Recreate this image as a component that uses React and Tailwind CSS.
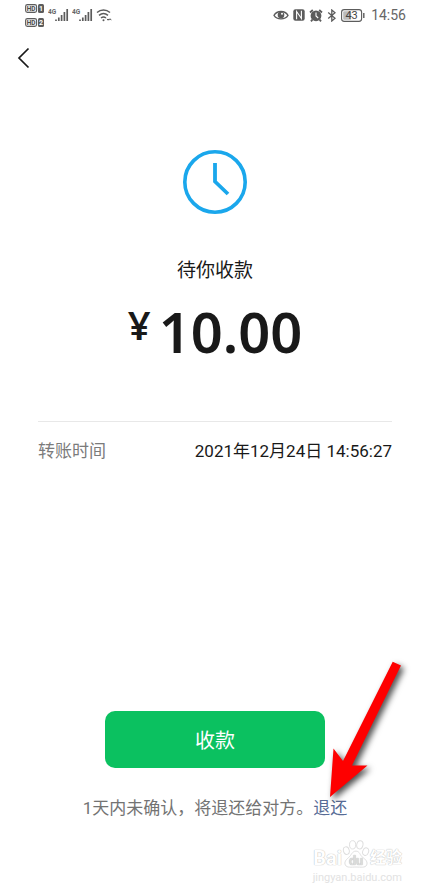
import React from 'react';

const details = [{ label: '转账时间', value: '2021年12月24日 14:56:27' }];

function HdBadge({ sim }) {
  return (
    <svg viewBox="0 0 20 9" className="h-[9px] w-5">
      <rect x="0.6" y="0.6" width="11" height="7.8" rx="1.8" fill="#eee" stroke="#5c5c5c" strokeWidth="1.1" />
      <rect x="13" y="0" width="6" height="9" rx="1.5" fill="#5c5c5c" />
      <text x="6.1" y="6.9" fontSize="6.5" fontWeight="700" fill="#4c4c4c" textAnchor="middle">HD</text>
      <text x="16" y="7" fontSize="7" fontWeight="700" fill="#fff" textAnchor="middle">{sim}</text>
    </svg>
  );
}

function Signal() {
  return (
    <svg viewBox="0 0 21 14" className="h-[14px] w-[21px]">
      <text x="0" y="6" fontSize="6.5" fontWeight="700" fill="#666">4G</text>
      <path d="M8 11.5V13M10.8 9.5V13M13.6 7V13M16.4 4V13M19.2 1V13" stroke="#5c5c5c" strokeWidth="1.7" />
    </svg>
  );
}

function Wifi() {
  return (
    <svg viewBox="0 0 16 14" className="h-[14px] w-4" fill="none" stroke="#5c5c5c" strokeWidth="1.5">
      <path d="M1 4.5C4.8 1.2 10.2 1.2 14 4.5M3 7.3c2.8-2.2 6.2-2.2 9 0M5 10c1.6-1.2 3.4-1.2 5 0" />
      <circle cx="7.5" cy="12.2" r="1" fill="#5c5c5c" stroke="none" />
      <path d="M11 10.8l1 1.4 1-1.4M13.2 12.2l1-1.4 1 1.4" strokeWidth="1" />
    </svg>
  );
}

function StatusIcons() {
  return (
    <>
      <svg viewBox="0 0 16 12" className="h-3 w-4" fill="none" stroke="#5c5c5c">
        <path d="M1 6.3C4 1.2 12 1.2 15 6.3 12 11 4 11 1 6.3Z" strokeWidth="1.3" />
        <circle cx="8" cy="6" r="3.3" fill="#5c5c5c" stroke="none" />
        <circle cx="9" cy="4.8" r="1" fill="#fff" stroke="none" />
      </svg>
      <svg viewBox="0 0 12 12" className="h-3 w-3" fill="none">
        <rect x="0.3" y="0.3" width="11.4" height="11.4" rx="2.2" fill="#5c5c5c" />
        <path d="M3.6 10.3V2.5L8.4 9.5V1.7" stroke="#fff" strokeWidth="1.1" />
      </svg>
      <svg viewBox="0 0 14 13" className="h-[13px] w-[14px]">
        <circle cx="7" cy="6.8" r="5.4" fill="#5c5c5c" />
        <path d="M1 3.4 3.8 1.1M13 3.4 10.2 1.1M3.5 10.5l-1.5 1.8M10.5 10.5l1.5 1.8" stroke="#5c5c5c" strokeWidth="1.9" />
        <path d="M7 3.6V7l2.2 2" fill="none" stroke="#fff" strokeWidth="1.1" />
      </svg>
      <svg viewBox="0 0 10 13" className="h-[13px] w-[10px]" fill="none" stroke="#5c5c5c" strokeWidth="1.3">
        <path d="M1.2 3.5 8 9.2 4.8 12V1L8 3.8 1.2 9.5" />
      </svg>
      <svg viewBox="0 0 24 13" className="h-[13px] w-6">
        <rect x="0.6" y="0.6" width="20" height="11.8" rx="2.6" fill="#fff" stroke="#5c5c5c" strokeWidth="1.1" />
        <rect x="2.2" y="2.2" width="8" height="8.6" rx="1" fill="#bbb" />
        <path d="M22.8 4V9" stroke="#5c5c5c" strokeWidth="1.4" />
        <text x="10.6" y="10.4" fontSize="11" fill="#444" textAnchor="middle">43</text>
      </svg>
    </>
  );
}

function StatusBar() {
  return (
    <div className="flex h-[30px] items-center justify-between pl-[25px] pr-6">
      <div className="flex items-center gap-[3px]">
        <div className="flex flex-col gap-[5px]">
          <HdBadge sim="1" />
          <HdBadge sim="2" />
        </div>
        <div className="flex items-center gap-[3px]">
          <Signal />
          <Signal />
          <Wifi />
        </div>
      </div>
      <div className="flex items-center gap-1">
        <StatusIcons />
        <span className="ml-[2px] text-sm text-[#666]">14:56</span>
      </div>
    </div>
  );
}

function Watermark() {
  return (
    <div className="flex flex-col items-end pr-[28px]" aria-hidden="true">
      <div className="flex h-7 items-end text-white [text-shadow:0_0_1px_#bbb,0_0_1px_#ccc]">
        <span className="text-xl leading-5 font-bold">Bai</span>
        <svg viewBox="0 0 28 29" className="h-7 w-7">
          <g fill="#fff" stroke="#dedede" strokeWidth="1">
            <ellipse cx="4" cy="11" rx="3" ry="4" transform="rotate(-15 4 11)" />
            <ellipse cx="10.5" cy="5" rx="3.2" ry="4.3" />
            <ellipse cx="18" cy="5" rx="3.2" ry="4.3" transform="rotate(12 18 5)" />
            <ellipse cx="24" cy="12" rx="3" ry="4" transform="rotate(20 24 12)" />
            <path d="M14 11.5c-4 0-4.5 4-7.5 6.5S1.5 23 3 26c1.8 3 6 2 11 2s9.5 1 11-2-1-6-4-8-3-6.5-7-6.5Z" />
          </g>
          <text x="14" y="26" fontSize="13" fontWeight="500" fill="#dcdcdc" textAnchor="middle">du</text>
        </svg>
        <span className="text-base leading-5 font-bold">经验</span>
      </div>
      <span className="mt-1 text-[11px] leading-3 text-[#e2e2e2]">jingyan.baidu.com</span>
    </div>
  );
}

export default function App() {
  return (
    <div className="flex min-h-screen flex-col bg-white font-[Roboto,'Noto_Sans_CJK_SC',sans-serif] text-[#191919]">
      <StatusBar />

      <header className="flex h-14 items-center pl-4">
        <button type="button" aria-label="返回" className="flex h-8 w-4 items-center">
          <svg viewBox="0 0 16 22" className="h-[22px] w-4" fill="none" stroke="#191919" strokeWidth="1.7">
            <path d="M12.5 1.5 3 11l9.5 9.5" />
          </svg>
        </button>
      </header>

      <main className="flex flex-1 flex-col">
        {/* Transfer state and amount */}
        <section className="flex flex-col items-center pt-16">
          <svg viewBox="0 0 64 64" className="size-16" fill="none" stroke="#1aa7ec">
            <circle cx="32" cy="32" r="30.2" strokeWidth="3.6" />
            <path d="M32 13V31.5L45 44" strokeWidth="3.8" />
          </svg>
          <h1 className="mt-[43px] text-[19px] leading-7">待你收款</h1>
          <p className="mt-2 flex items-start gap-2 font-['Noto_Sans',sans-serif] font-semibold">
            <span className="text-[40px] leading-[64px]">¥</span>
            <span className="text-[56px] leading-[76px]">10.00</span>
          </p>
        </section>

        <dl className="mx-[38px] mt-[52px] border-t border-[#e8e8e8] pt-[17px] text-[17px] leading-6">
          {details.map((item) => (
            <div key={item.label} className="flex justify-between">
              <dt className="text-[#7b7b7b]">{item.label}</dt>
              <dd>{item.value}</dd>
            </div>
          ))}
        </dl>

        {/* Actions */}
        <section className="relative mx-auto mt-auto flex flex-col items-center">
          <button type="button" className="h-[57px] w-[220px] rounded-[10px] bg-[#0bc160] pt-[3px] text-xl text-white">
            收款
          </button>
          <p className="mt-7 text-[17px] leading-6 text-[#737373]">
            1天内未确认，将退还给对方。<a href="#refund" className="text-[#576b95]">退还</a>
          </p>
          <svg
            viewBox="0 0 90 150"
            className="pointer-events-none absolute bottom-[18px] -right-[60px] h-[150px] w-[90px] overflow-visible drop-shadow-[3px_3px_3px_rgba(0,0,0,0.7)]"
          >
            <path d="M75.7 9.7 84 13.5 35 113.5H50.5L13 145 16.5 96.5 26 109Z" fill="#fe0000" />
          </svg>
        </section>
      </main>

      <footer className="pt-5 pb-[9px]">
        <Watermark />
      </footer>
    </div>
  );
}
